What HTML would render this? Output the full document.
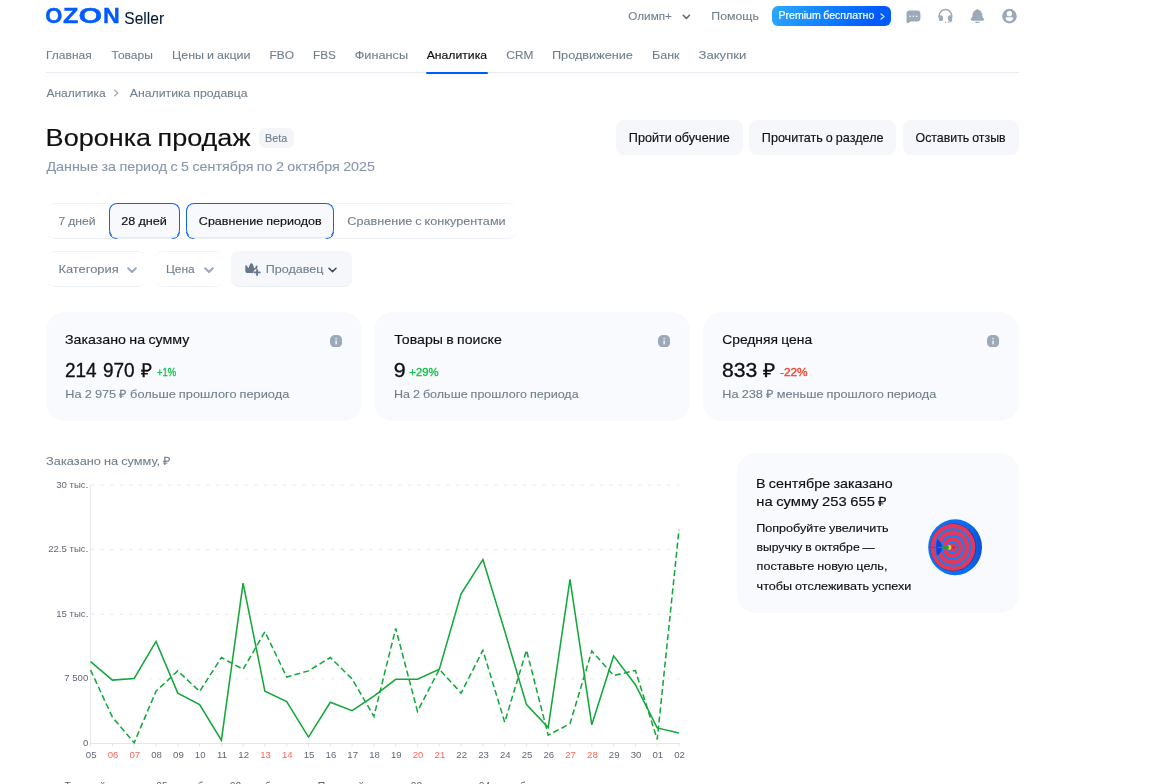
<!DOCTYPE html>
<html lang="ru">
<head>
<meta charset="utf-8">
<title>Воронка продаж — Ozon Seller</title>
<style>
*{box-sizing:border-box;margin:0;padding:0}
html,body{width:1161px;height:784px;overflow:hidden;background:#fff}
body{position:relative;font-family:"Liberation Sans",Arial,sans-serif;color:#0f1011;font-size:12px;line-height:1}
.app{position:absolute;left:0;top:0;width:1161px;height:784px;overflow:hidden;will-change:opacity}
.abs{position:absolute}
.x{position:absolute;white-space:nowrap;line-height:1;font-weight:400;-webkit-text-stroke:0.1px currentColor;transform-origin:0 0;text-decoration:none;font-family:"Liberation Sans",Arial,sans-serif}
.logo{white-space:nowrap;line-height:1;font-weight:700;color:#005bff;letter-spacing:0;-webkit-text-stroke:0.35px #005bff}
.logo span{display:inline-block;width:1px;transform-origin:0 0}
.premium{left:772px;top:6px;width:119px;height:20px;border-radius:6px;background:linear-gradient(115deg,#2ea9ff 0%,#1585ff 40%,#005bff 85%)}
.navline{left:46px;top:72px;width:973px;height:1px;background:#e8ecf2}
.navact{left:426px;top:72px;width:61.500px;height:2px;background:#005bff;border-radius:1px}
.beta{left:259px;top:128px;width:35px;height:20px;border-radius:6px;background:#f3f5f9}
.btn{top:120.300px;height:34.500px;border-radius:8px;background:#f5f7fa}
.tabs{left:46px;top:203px;width:471px;height:36px;border-bottom:1px solid #f0f2f6;border-radius:9px}
.tabu{top:203px;height:36px;border-top:1px solid #f1f3f7}
.sel{top:203.300px;height:35.200px;background:#f8f9fd;border:1.500px solid #0f62ff;border-bottom:1px solid #e6eaf2;border-radius:8px}
.selc{top:232px;height:7px;border:1.500px solid #0f62ff;border-top:0;border-radius:0 0 8px 8px;-webkit-mask:linear-gradient(90deg,#000 0,#000 7px,transparent 9px,transparent calc(100% - 9px),#000 calc(100% - 7px),#000 100%);mask:linear-gradient(90deg,#000 0,#000 7px,transparent 9px,transparent calc(100% - 9px),#000 calc(100% - 7px),#000 100%)}
.flt{top:251px;height:36px;border-top:1px solid #f1f3f7;border-bottom:1px solid #f1f3f7;border-radius:9px}
.fltf{left:231px;top:251px;width:121px;height:35.500px;border-radius:8px;background:#f5f7fa;border-bottom:1px solid #eceff4}
.card{top:312.1px;height:108.8px;border-radius:19px;background:#f9fafd}
.promo{left:736.7px;top:452.8px;width:282.2px;height:160.7px;border-radius:19px;background:#f9fafd}
</style>
</head>
<body>
<div class="app">
<header>
<!--LOGO--><div class="abs logo" style="left:44px;top:5px;font-size:21.2px"><span style="margin-left:1px;transform:translateX(0.37px) scaleX(1.040)">O</span><span style="margin-left:17px;transform:translateX(0.00px) scaleX(1.188)">Z</span><span style="margin-left:14px;transform:translateX(0.49px) scaleX(1.438)">O</span><span style="margin-left:23px;transform:translateX(0.95px) scaleX(1.095)">N</span></div><!--/LOGO-->
<svg class="abs" style="left:682px;top:13.500px" width="9" height="6.500" viewBox="0 0 9 6.500"><path d="M1.300 1.300l3.100 3.200 3.100-3.200" fill="none" stroke="#5e6b7a" stroke-width="1.600" stroke-linecap="round" stroke-linejoin="round"/></svg>
<div class="abs premium"></div>
<svg class="abs" style="left:880px;top:13px" width="6" height="7" viewBox="0 0 6 7"><path d="M1 1l3 2.500L1 6" fill="none" stroke="#c9dcff" stroke-width="1.400" stroke-linecap="round" stroke-linejoin="round"/></svg>
<svg class="abs" style="left:904px;top:8px" width="20" height="18" viewBox="904 8 20 18"><path fill="#9ba9b9" d="M909.800 10.600h7.300a3.300 3.300 0 0 1 3.300 3.300v4.400a3.300 3.300 0 0 1-3.300 3.300h-6.500l-2.300 1.500c-.800.500-1.800 0-1.800-1v-8.200a3.300 3.300 0 0 1 3.300-3.300z"/><g fill="#fff"><circle cx="910.100" cy="16.300" r=".8"/><circle cx="913.400" cy="16.300" r=".8"/><circle cx="916.700" cy="16.300" r=".8"/></g></svg>
<svg class="abs" style="left:936px;top:7px" width="20" height="19" viewBox="936 7 20 19"><path d="M939.100 17.500v-1.600a6.350 6.350 0 0 1 12.700 0v1.600" fill="none" stroke="#9ba9b9" stroke-width="1.500"/><ellipse cx="940.900" cy="18.200" rx="2.100" ry="2.900" fill="#9ba9b9"/><ellipse cx="950" cy="18.200" rx="2.100" ry="2.900" fill="#9ba9b9"/><path d="M951.700 19c0 2.200-1.600 3.300-4 3.300" fill="none" stroke="#9ba9b9" stroke-width="1.100"/><circle cx="945.500" cy="22.300" r=".75" fill="#9ba9b9"/></svg>
<svg class="abs" style="left:969px;top:7px" width="17" height="18" viewBox="969 7 17 18"><path fill="#9ba9b9" d="M977.400 9c.5 0 .9.300 1 .8 2.200.6 3.600 2.500 3.800 5l.3 1.700c.2 1.100 1.300 1.800 1.500 2.600.2 1-.6 1.600-1.600 1.600h-10c-1 0-1.800-.6-1.600-1.600.2-.8 1.300-1.500 1.500-2.600l.3-1.700c.2-2.500 1.600-4.400 3.800-5 .1-.5.500-.8 1-.8z"/><ellipse cx="977.400" cy="22.300" rx="2.500" ry=".75" fill="#9ba9b9"/></svg>
<svg class="abs" style="left:1001px;top:7px" width="18" height="18" viewBox="1001 7 18 18"><circle cx="1009.450" cy="16.150" r="7.300" fill="#9ba9b9"/><circle cx="1009.400" cy="13.700" r="2.650" fill="#fff"/><path fill="#fff" d="M1005.600 18.600c0-.9.700-1.400 1.500-1.400h4.600c.8 0 1.500.5 1.500 1.400 0 1.500-1.700 2.600-3.800 2.600s-3.800-1.100-3.800-2.600z"/></svg>
</header>
<div class="abs navline"></div>
<div class="abs navact"></div>
<svg class="abs" style="left:113px;top:89px" width="7" height="8" viewBox="0 0 7 8"><path d="M1.800 1.200l2.900 2.800-2.900 2.800" fill="none" stroke="#9ba9b9" stroke-width="1.300" stroke-linecap="round" stroke-linejoin="round"/></svg>
<div class="abs beta"></div>
<div class="abs btn" style="left:616px;width:126.500px"></div>
<div class="abs btn" style="left:749.300px;width:146.500px"></div>
<div class="abs btn" style="left:903.200px;width:115.600px"></div>
<div class="abs tabs"></div>
<div class="abs tabu" style="left:46px;width:63px;border-radius:9px 0 0 9px"></div>
<div class="abs tabu" style="left:334px;width:183px;border-radius:0 9px 9px 0"></div>
<div class="abs sel" style="left:109px;width:71px"></div>
<div class="abs selc" style="left:109px;width:71px"></div>
<div class="abs sel" style="left:186px;width:148px"></div>
<div class="abs selc" style="left:186px;width:148px"></div>
<div class="abs flt" style="left:46px;width:101px"></div>
<div class="abs flt" style="left:153.700px;width:70.500px"></div>
<div class="abs fltf"></div>
<svg class="abs" style="left:127px;top:267px" width="10" height="7" viewBox="0 0 10 7"><path d="M1.200 1.300L5 5l3.800-3.700" fill="none" stroke="#9ba9b9" stroke-width="2.1" stroke-linecap="round" stroke-linejoin="round"/></svg>
<svg class="abs" style="left:203.500px;top:267px" width="10" height="7" viewBox="0 0 10 7"><path d="M1.200 1.300L5 5l3.800-3.700" fill="none" stroke="#9ba9b9" stroke-width="2.1" stroke-linecap="round" stroke-linejoin="round"/></svg>
<svg class="abs" style="left:243px;top:261px" width="20" height="17" viewBox="243 261 20 17"><path fill="#66758a" d="M245.300 266.100c0-1 1.300-1.300 1.700-.4l.9 1.900c.2.400.7.400.9 0l1.300-3.500c.5-1.300 2.100-1.300 2.600 0l1.400 3.800c.2.500.8.500 1 .1l.9-1.900c.4-.9 1.600-.5 1.500.4l-.4 2.300c-1.900.3-3.400 1.800-3.700 3.700l-.1.600h-5.600c-1.300 0-2.400-1-2.400-2.400z"/><path d="M257.100 269.900v5M254.600 272.400h5.200" stroke="#66758a" stroke-width="1.900" stroke-linecap="round"/></svg>
<svg class="abs" style="left:328px;top:266.500px" width="9" height="6" viewBox="0 0 9 6"><path d="M1 1.200l3.500 3.400L8 1.200" fill="none" stroke="#3c4a5a" stroke-width="1.500" stroke-linecap="round" stroke-linejoin="round"/></svg>
<div class="abs card" style="left:46.200px;width:315.600px"></div>
<div class="abs card" style="left:374.300px;width:315.800px"></div>
<div class="abs card" style="left:703px;width:315.800px"></div>
<svg class="abs" style="left:330.0px;top:334.6px" width="12.2" height="12.4" viewBox="0 0 12.2 12.4"><rect width="12.2" height="12.4" rx="4.9" fill="#9ba9b9"/><circle cx="6.1" cy="3.6" r=".85" fill="#fff" opacity=".85"/><rect x="5.4" y="5.4" width="1.4" height="4" rx=".3" fill="#fff" opacity=".95"/></svg>
<svg class="abs" style="left:658.3px;top:334.6px" width="12.2" height="12.4" viewBox="0 0 12.2 12.4"><rect width="12.2" height="12.4" rx="4.9" fill="#9ba9b9"/><circle cx="6.1" cy="3.6" r=".85" fill="#fff" opacity=".85"/><rect x="5.4" y="5.4" width="1.4" height="4" rx=".3" fill="#fff" opacity=".95"/></svg>
<svg class="abs" style="left:986.8px;top:334.6px" width="12.2" height="12.4" viewBox="0 0 12.2 12.4"><rect width="12.2" height="12.4" rx="4.9" fill="#9ba9b9"/><circle cx="6.1" cy="3.6" r=".85" fill="#fff" opacity=".85"/><rect x="5.4" y="5.4" width="1.4" height="4" rx=".3" fill="#fff" opacity=".95"/></svg>
<div class="abs promo"></div>
<svg class="abs" style="left:925px;top:516px" width="60" height="62" viewBox="925 516 60 62">
<defs>
<linearGradient id="tg1" x1="0" y1="0" x2="1" y2="0"><stop offset="0" stop-color="#0a78f5"/><stop offset=".75" stop-color="#0a6cf0"/><stop offset="1" stop-color="#0b50d4"/></linearGradient>
</defs>
<ellipse cx="955.1" cy="547.3" rx="26.9" ry="28" fill="url(#tg1)"/>
<ellipse cx="953.3" cy="547.3" rx="23" ry="24" fill="#2b3aa8"/>
<ellipse cx="952.9" cy="547.3" rx="22.4" ry="23.5" fill="#e5375a"/>
<g fill="none" stroke="#0e82fa" stroke-width="1.9">
<ellipse cx="952.8" cy="547.4" rx="17.4" ry="18.2"/>
<ellipse cx="952.8" cy="547.4" rx="11.1" ry="11.6"/>
<ellipse cx="952.8" cy="547.4" rx="5.1" ry="5.3"/>
</g>
<circle cx="953.6" cy="547.4" r="1.2" fill="#b3283c"/>
<path d="M930.3 547.4h6.500" stroke="#2a58d0" stroke-width=".9"/>
<path d="M937 539c2.700 1.600 4.800 4.600 5.300 8.400-.5 3.800-2.600 6.800-5.300 8.400-.6-2.900-.8-5.600-.8-8.400s.2-5.500.8-8.400z" fill="#0f3fdc"/>
<ellipse cx="949.3" cy="547.4" rx="2.100" ry="2.300" fill="#e6c83c"/>
<path d="M936.300 547.400l10.500-1.700c1.500.2 2.200.9 2.200 1.700s-.7 1.500-2.200 1.700z" fill="#1f9f4c"/>
<path d="M938 547.400h7" stroke="#1a7bd0" stroke-width=".7"/>
</svg>

<svg class="abs" style="left:0;top:470px" width="720" height="314" viewBox="0 470 720 314" font-family="'Liberation Sans',Arial,sans-serif" font-size="9.6">
<line x1="90.6" y1="485.0" x2="679.5" y2="485.0" stroke="#e6e8ee" stroke-width="1" stroke-dasharray="3 6.6" stroke-dashoffset="-0.6"/>
<text x="88.3" y="488" text-anchor="end" fill="#606874">30 тыс.</text>
<line x1="90.6" y1="549.6" x2="679.5" y2="549.6" stroke="#e6e8ee" stroke-width="1" stroke-dasharray="3 6.6" stroke-dashoffset="-0.6"/>
<text x="88.3" y="552" text-anchor="end" fill="#606874">22.5 тыс.</text>
<line x1="90.6" y1="614.2" x2="679.5" y2="614.2" stroke="#e6e8ee" stroke-width="1" stroke-dasharray="3 6.6" stroke-dashoffset="-0.6"/>
<text x="88.3" y="617" text-anchor="end" fill="#606874">15 тыс.</text>
<line x1="90.6" y1="678.9" x2="679.5" y2="678.9" stroke="#e6e8ee" stroke-width="1" stroke-dasharray="3 6.6" stroke-dashoffset="-0.6"/>
<text x="88.3" y="681" text-anchor="end" fill="#606874">7 500</text>
<text x="88.3" y="746" text-anchor="end" fill="#606874">0</text>
<line x1="90.6" y1="485.0" x2="90.6" y2="743.5" stroke="#e5e6e8" stroke-width="1"/>
<line x1="90.1" y1="743.5" x2="679.5" y2="743.5" stroke="#e5e6e8" stroke-width="1"/>
<line x1="90.6" y1="743.5" x2="90.6" y2="746.5" stroke="#e3e5e9" stroke-width="1"/>
<text x="91.2" y="758" text-anchor="middle" fill="#606874">05</text>
<line x1="112.4" y1="743.5" x2="112.4" y2="746.5" stroke="#e3e5e9" stroke-width="1"/>
<text x="113.0" y="758" text-anchor="middle" fill="#f7685b">06</text>
<line x1="134.2" y1="743.5" x2="134.2" y2="746.5" stroke="#e3e5e9" stroke-width="1"/>
<text x="134.8" y="758" text-anchor="middle" fill="#f7685b">07</text>
<line x1="156.0" y1="743.5" x2="156.0" y2="746.5" stroke="#e3e5e9" stroke-width="1"/>
<text x="156.6" y="758" text-anchor="middle" fill="#606874">08</text>
<line x1="177.8" y1="743.5" x2="177.8" y2="746.5" stroke="#e3e5e9" stroke-width="1"/>
<text x="178.4" y="758" text-anchor="middle" fill="#606874">09</text>
<line x1="199.6" y1="743.5" x2="199.6" y2="746.5" stroke="#e3e5e9" stroke-width="1"/>
<text x="200.2" y="758" text-anchor="middle" fill="#606874">10</text>
<line x1="221.4" y1="743.5" x2="221.4" y2="746.5" stroke="#e3e5e9" stroke-width="1"/>
<text x="222.0" y="758" text-anchor="middle" fill="#606874">11</text>
<line x1="243.1" y1="743.5" x2="243.1" y2="746.5" stroke="#e3e5e9" stroke-width="1"/>
<text x="243.7" y="758" text-anchor="middle" fill="#606874">12</text>
<line x1="264.9" y1="743.5" x2="264.9" y2="746.5" stroke="#e3e5e9" stroke-width="1"/>
<text x="265.5" y="758" text-anchor="middle" fill="#f7685b">13</text>
<line x1="286.7" y1="743.5" x2="286.7" y2="746.5" stroke="#e3e5e9" stroke-width="1"/>
<text x="287.3" y="758" text-anchor="middle" fill="#f7685b">14</text>
<line x1="308.5" y1="743.5" x2="308.5" y2="746.5" stroke="#e3e5e9" stroke-width="1"/>
<text x="309.1" y="758" text-anchor="middle" fill="#606874">15</text>
<line x1="330.3" y1="743.5" x2="330.3" y2="746.5" stroke="#e3e5e9" stroke-width="1"/>
<text x="330.9" y="758" text-anchor="middle" fill="#606874">16</text>
<line x1="352.1" y1="743.5" x2="352.1" y2="746.5" stroke="#e3e5e9" stroke-width="1"/>
<text x="352.7" y="758" text-anchor="middle" fill="#606874">17</text>
<line x1="373.9" y1="743.5" x2="373.9" y2="746.5" stroke="#e3e5e9" stroke-width="1"/>
<text x="374.5" y="758" text-anchor="middle" fill="#606874">18</text>
<line x1="395.7" y1="743.5" x2="395.7" y2="746.5" stroke="#e3e5e9" stroke-width="1"/>
<text x="396.3" y="758" text-anchor="middle" fill="#606874">19</text>
<line x1="417.5" y1="743.5" x2="417.5" y2="746.5" stroke="#e3e5e9" stroke-width="1"/>
<text x="418.1" y="758" text-anchor="middle" fill="#f7685b">20</text>
<line x1="439.3" y1="743.5" x2="439.3" y2="746.5" stroke="#e3e5e9" stroke-width="1"/>
<text x="439.9" y="758" text-anchor="middle" fill="#f7685b">21</text>
<line x1="461.1" y1="743.5" x2="461.1" y2="746.5" stroke="#e3e5e9" stroke-width="1"/>
<text x="461.7" y="758" text-anchor="middle" fill="#606874">22</text>
<line x1="482.9" y1="743.5" x2="482.9" y2="746.5" stroke="#e3e5e9" stroke-width="1"/>
<text x="483.5" y="758" text-anchor="middle" fill="#606874">23</text>
<line x1="504.7" y1="743.5" x2="504.7" y2="746.5" stroke="#e3e5e9" stroke-width="1"/>
<text x="505.3" y="758" text-anchor="middle" fill="#606874">24</text>
<line x1="526.5" y1="743.5" x2="526.5" y2="746.5" stroke="#e3e5e9" stroke-width="1"/>
<text x="527.1" y="758" text-anchor="middle" fill="#606874">25</text>
<line x1="548.2" y1="743.5" x2="548.2" y2="746.5" stroke="#e3e5e9" stroke-width="1"/>
<text x="548.8" y="758" text-anchor="middle" fill="#606874">26</text>
<line x1="570.0" y1="743.5" x2="570.0" y2="746.5" stroke="#e3e5e9" stroke-width="1"/>
<text x="570.6" y="758" text-anchor="middle" fill="#f7685b">27</text>
<line x1="591.8" y1="743.5" x2="591.8" y2="746.5" stroke="#e3e5e9" stroke-width="1"/>
<text x="592.4" y="758" text-anchor="middle" fill="#f7685b">28</text>
<line x1="613.6" y1="743.5" x2="613.6" y2="746.5" stroke="#e3e5e9" stroke-width="1"/>
<text x="614.2" y="758" text-anchor="middle" fill="#606874">29</text>
<line x1="635.4" y1="743.5" x2="635.4" y2="746.5" stroke="#e3e5e9" stroke-width="1"/>
<text x="636.0" y="758" text-anchor="middle" fill="#606874">30</text>
<line x1="657.2" y1="743.5" x2="657.2" y2="746.5" stroke="#e3e5e9" stroke-width="1"/>
<text x="657.8" y="758" text-anchor="middle" fill="#606874">01</text>
<line x1="679.0" y1="743.5" x2="679.0" y2="746.5" stroke="#e3e5e9" stroke-width="1"/>
<text x="679.6" y="758" text-anchor="middle" fill="#606874">02</text>
<polyline points="90.6,670.1 112.4,717.2 134.2,742.8 156.0,691.2 177.8,670.9 199.6,691.5 221.4,657.5 243.1,669.3 264.9,631.8 286.7,677.0 308.5,670.9 330.3,657.5 352.1,678.9 373.9,716.4 395.7,628.4 417.5,711.4 439.3,669.3 461.1,693.1 482.9,650.2 504.7,722.2 526.5,650.2 548.2,735.2 570.0,723.7 591.8,651.0 613.6,675.5 635.4,670.5 657.2,739.4 679.0,529.6" fill="none" stroke="#14a83c" stroke-width="1.55" stroke-dasharray="6 3.2" stroke-linejoin="miter"/>
<polyline points="90.6,661.7 112.4,680.1 134.2,678.5 156.0,641.4 177.8,693.1 199.6,704.6 221.4,740.2 243.1,583.2 264.9,691.2 286.7,701.5 308.5,737.1 330.3,702.3 352.1,710.7 373.9,696.1 395.7,679.3 417.5,679.3 439.3,669.3 461.1,593.9 482.9,559.5 504.7,631.1 526.5,704.6 548.2,727.5 570.0,579.4 591.8,724.8 613.6,655.9 635.4,684.7 657.2,727.9 679.0,732.9" fill="none" stroke="#14a83c" stroke-width="1.55" stroke-linejoin="miter"/>
<text y="789.6" font-size="10.3" fill="#606874"><tspan x="64.4">Текущий период</tspan><tspan x="156.3">05 сентября</tspan><tspan x="216.5">–</tspan><tspan x="229.8">02 октября</tspan></text>
<text y="789.6" font-size="10.3" fill="#606874"><tspan x="317.8">Прошлый период</tspan><tspan x="410.7">08 августа</tspan><tspan x="466">–</tspan><tspan x="478.8">04 сентября</tspan></text>
</svg>
<span class="x" style="left:124.00px;top:10.00px;font-size:17.3px;color:#001a34;transform:translateX(0.35px) scaleX(0.8989);">Seller</span>
<div class="x" style="left:628.00px;top:10.00px;font-size:11.7px;color:#707f8d;transform:translateX(0.33px) scaleX(0.9996);">Олимп+</div>
<div class="x" style="left:711.00px;top:10.00px;font-size:11.7px;color:#707f8d;transform:translateX(0.33px) scaleX(1.0517);">Помощь</div>
<div class="x" style="left:778.00px;top:10.00px;font-size:11px;color:#ffffff;word-spacing:-0.04em;-webkit-text-stroke-width:0.2px;transform:translateX(0.50px) scaleX(0.9591);">Premium бесплатно</div>
<a class="x" style="left:46.00px;top:49.00px;font-size:11.7px;color:#707f8d;transform:translateX(0.03px) scaleX(1.0260);">Главная</a>
<a class="x" style="left:111.00px;top:49.00px;font-size:11.7px;color:#707f8d;transform:translateX(0.50px) scaleX(1.0266);">Товары</a>
<a class="x" style="left:172.00px;top:49.00px;font-size:11.7px;color:#707f8d;word-spacing:-0.04em;transform:translateX(0.03px) scaleX(1.0682);">Цены и акции</a>
<a class="x" style="left:269.00px;top:49.00px;font-size:11.7px;color:#707f8d;transform:translateX(0.53px) scaleX(1.0184);">FBO</a>
<a class="x" style="left:312.00px;top:49.00px;font-size:11.7px;color:#707f8d;transform:translateX(0.98px) scaleX(1.0048);">FBS</a>
<a class="x" style="left:354.00px;top:49.00px;font-size:11.7px;color:#707f8d;transform:translateX(0.68px) scaleX(1.0869);">Финансы</a>
<a class="x" style="left:426.00px;top:49.00px;font-size:11.7px;color:#0f1011;-webkit-text-stroke-width:0.15px;transform:translateX(0.72px) scaleX(1.0431);">Аналитика</a>
<a class="x" style="left:506.00px;top:49.00px;font-size:11.7px;color:#707f8d;transform:translateX(0.31px) scaleX(1.0176);">CRM</a>
<a class="x" style="left:551.00px;top:49.00px;font-size:11.7px;color:#707f8d;transform:translateX(0.94px) scaleX(1.0871);">Продвижение</a>
<a class="x" style="left:652.00px;top:49.00px;font-size:11.7px;color:#707f8d;transform:translateX(0.06px) scaleX(1.0689);">Банк</a>
<a class="x" style="left:698.00px;top:49.00px;font-size:11.7px;color:#707f8d;transform:translateX(0.62px) scaleX(1.1162);">Закупки</a>
<a class="x" style="left:46.00px;top:87.00px;font-size:11.7px;color:#707f8d;transform:translateX(0.44px) scaleX(1.0246);">Аналитика</a>
<a class="x" style="left:129.00px;top:87.00px;font-size:11.7px;color:#707f8d;word-spacing:-0.04em;transform:translateX(0.81px) scaleX(1.0473);">Аналитика продавца</a>
<h1 class="x" style="left:45.00px;top:127.00px;font-size:23.6px;color:#0f1011;word-spacing:-0.04em;-webkit-text-stroke-width:0.15px;transform:translateX(0.61px) scaleX(1.1453);">Воронка продаж</h1>
<div class="x" style="left:265.00px;top:134.00px;font-size:10px;color:#707f8d;transform:translateX(0.05px) scaleX(1.0793);">Beta</div>
<div class="x" style="left:46.00px;top:161.00px;font-size:12.7px;color:#8797ab;word-spacing:-0.04em;transform:translateX(0.40px) scaleX(1.1278);">Данные за период с 5 сентября по 2 октября 2025</div>
<div class="x" style="left:628.00px;top:133.00px;font-size:11.9px;color:#0f1011;word-spacing:-0.04em;-webkit-text-stroke-width:0.15px;transform:translateX(0.83px) scaleX(1.0612);">Пройти обучение</div>
<div class="x" style="left:761.00px;top:133.00px;font-size:11.9px;color:#0f1011;word-spacing:-0.04em;-webkit-text-stroke-width:0.15px;transform:translateX(0.83px) scaleX(1.0589);">Прочитать о разделе</div>
<div class="x" style="left:915.00px;top:133.00px;font-size:11.9px;color:#0f1011;word-spacing:-0.04em;-webkit-text-stroke-width:0.15px;transform:translateX(0.52px) scaleX(1.0392);">Оставить отзыв</div>
<div class="x" style="left:58.00px;top:215.00px;font-size:11.7px;color:#707f8d;word-spacing:-0.04em;transform:translateX(0.58px) scaleX(1.0400);">7 дней</div>
<div class="x" style="left:121.00px;top:215.00px;font-size:11.7px;color:#0f1011;word-spacing:-0.04em;-webkit-text-stroke-width:0.15px;transform:translateX(0.33px) scaleX(1.0821);">28 дней</div>
<div class="x" style="left:198.00px;top:215.00px;font-size:11.7px;color:#0f1011;word-spacing:-0.04em;-webkit-text-stroke-width:0.15px;transform:translateX(0.85px) scaleX(1.0717);">Сравнение периодов</div>
<div class="x" style="left:347.00px;top:215.00px;font-size:11.7px;color:#707f8d;word-spacing:-0.04em;transform:translateX(0.27px) scaleX(1.0820);">Сравнение с конкурентами</div>
<div class="x" style="left:58.00px;top:263.00px;font-size:11.7px;color:#707f8d;transform:translateX(0.41px) scaleX(1.1024);">Категория</div>
<div class="x" style="left:165.00px;top:263.00px;font-size:11.7px;color:#707f8d;transform:translateX(0.94px) scaleX(1.0266);">Цена</div>
<div class="x" style="left:265.00px;top:263.00px;font-size:11.7px;color:#707f8d;transform:translateX(0.82px) scaleX(1.0718);">Продавец</div>
<div class="x" style="left:64.00px;top:334.00px;font-size:12.7px;color:#0f1011;word-spacing:-0.04em;-webkit-text-stroke-width:0.15px;transform:translateX(0.92px) scaleX(1.1219);">Заказано на сумму</div>
<div class="x" style="left:64.00px;top:361.00px;font-size:19.4px;color:#0f1011;word-spacing:0.06em;-webkit-text-stroke-width:0.3px;transform:translateX(0.91px) scaleX(0.9790);">214 970 ₽</div>
<div class="x" style="left:156.00px;top:366.00px;font-size:11.7px;color:#10c44c;-webkit-text-stroke-width:0.35px;transform:translateX(0.92px) scaleX(0.8094);">+1%</div>
<div class="x" style="left:65.00px;top:389.00px;font-size:11.5px;color:#707f8d;word-spacing:-0.04em;transform:translateX(0.33px) scaleX(1.1127);">На 2 975 ₽ больше прошлого периода</div>
<div class="x" style="left:394.00px;top:334.00px;font-size:12.7px;color:#0f1011;word-spacing:-0.04em;-webkit-text-stroke-width:0.15px;transform:translateX(0.30px) scaleX(1.1133);">Товары в поиске</div>
<div class="x" style="left:393.00px;top:361.00px;font-size:19.4px;color:#0f1011;-webkit-text-stroke-width:0.3px;transform:translateX(0.72px) scaleX(1.1060);">9</div>
<div class="x" style="left:409.00px;top:366.00px;font-size:11.7px;color:#10c44c;-webkit-text-stroke-width:0.35px;transform:translateX(0.35px) scaleX(0.9670);">+29%</div>
<div class="x" style="left:394.00px;top:389.00px;font-size:11.5px;color:#707f8d;word-spacing:-0.04em;transform:translateX(0.03px) scaleX(1.0885);">На 2 больше прошлого периода</div>
<div class="x" style="left:722.00px;top:334.00px;font-size:12.7px;color:#0f1011;word-spacing:-0.04em;-webkit-text-stroke-width:0.15px;transform:translateX(0.18px) scaleX(1.0911);">Средняя цена</div>
<div class="x" style="left:722.00px;top:361.00px;font-size:19.4px;color:#0f1011;word-spacing:0.0em;-webkit-text-stroke-width:0.3px;transform:translateX(0.03px) scaleX(1.0924);">833 ₽</div>
<div class="x" style="left:779.00px;top:366.00px;font-size:11.7px;color:#f2412c;-webkit-text-stroke-width:0.35px;transform:translateX(0.93px) scaleX(1.0165);">-22%</div>
<div class="x" style="left:722.00px;top:389.00px;font-size:11.5px;color:#707f8d;word-spacing:-0.04em;transform:translateX(0.33px) scaleX(1.1070);">На 238 ₽ меньше прошлого периода</div>
<div class="x" style="left:46.00px;top:456.00px;font-size:11.5px;color:#707f8d;word-spacing:-0.04em;transform:translateX(0.12px) scaleX(1.1109);">Заказано на сумму, ₽</div>
<div class="x" style="left:755.00px;top:478.00px;font-size:12.7px;color:#0f1011;word-spacing:-0.04em;-webkit-text-stroke-width:0.15px;transform:translateX(0.89px) scaleX(1.1249);">В сентябре заказано</div>
<div class="x" style="left:756.00px;top:496.00px;font-size:12.7px;color:#0f1011;word-spacing:-0.04em;-webkit-text-stroke-width:0.15px;transform:translateX(0.29px) scaleX(1.1635);">на сумму 253 655 ₽</div>
<div class="x" style="left:756.00px;top:523.00px;font-size:11.5px;color:#0f1011;word-spacing:-0.04em;-webkit-text-stroke-width:0.15px;transform:translateX(0.24px) scaleX(1.0938);">Попробуйте увеличить</div>
<div class="x" style="left:756.00px;top:542.00px;font-size:11.5px;color:#0f1011;word-spacing:-0.04em;-webkit-text-stroke-width:0.15px;transform:translateX(0.48px) scaleX(1.0604);">выручку в октябре —</div>
<div class="x" style="left:756.00px;top:561.00px;font-size:11.5px;color:#0f1011;word-spacing:-0.04em;-webkit-text-stroke-width:0.15px;transform:translateX(0.60px) scaleX(1.0950);">поставьте новую цель,</div>
<div class="x" style="left:756.00px;top:581.00px;font-size:11.5px;color:#0f1011;word-spacing:-0.04em;-webkit-text-stroke-width:0.15px;transform:translateX(0.56px) scaleX(1.0960);">чтобы отслеживать успехи</div>
</div>
</body>
</html>
